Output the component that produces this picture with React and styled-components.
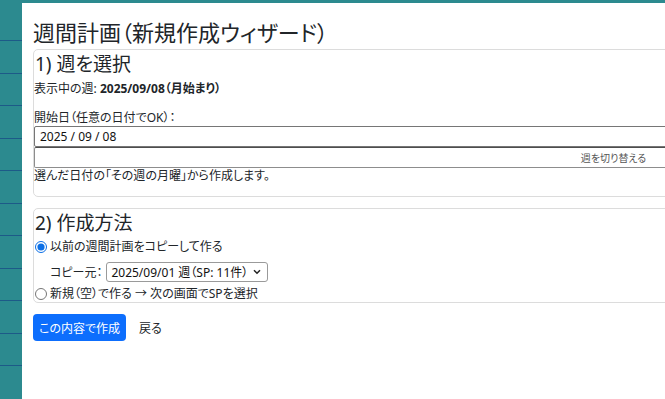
import React from 'react';
import styled, { createGlobalStyle } from 'styled-components';

const GlobalStyle = createGlobalStyle`
    html, body {
        margin: 0;
        padding: 0;
        overflow: hidden;
    }

    body {
        font-family: "Noto Sans", "Noto Sans CJK JP", sans-serif;
        font-feature-settings: "palt";
        color: #212529;
        background: #2c8a8f;
    }
`;

const Page = styled.div`
    display: flex;
    height: 399px;
    overflow: hidden;
    background: #2c8a8f;
`;

const Sidebar = styled.div`
    flex: 0 0 22px;
    display: flex;
    flex-direction: column;
    padding-top: 40px;
`;

const SidebarRow = styled.div`
    flex: 0 0 32.5px;
    box-sizing: border-box;
    border-top: 1.5px solid #1d5a88;
`;

const Panel = styled.div`
    flex: 0 0 1200px;
    margin-top: 3px;
    padding: 16px 0 0 11px;
    box-sizing: border-box;
    background: #fff;
`;

const Title = styled.h1`
    margin: 0 0 4px;
    font-size: 22px;
    line-height: 26px;
    font-weight: 400;
`;

const Section = styled.section`
    width: 1159px;
    border: 1px solid #dcdcdc;
    border-radius: 5px;
    padding: 3px 0 ${({ $bottom }) => $bottom}px;
    margin-bottom: ${({ $gap }) => $gap}px;
`;

const SectionTitle = styled.h2`
    margin: 0 0 0 1px;
    font-size: 19px;
    line-height: 23px;
    font-weight: 400;
`;

const Line = styled.div`
    font-size: 12px;
    line-height: 18px;
    margin-top: 4px;
`;

const Label = styled.label`
    display: block;
    font-size: 12px;
    line-height: 16px;
    margin-top: 12px;
`;

const DateInput = styled.input`
    display: block;
    box-sizing: border-box;
    width: 100%;
    height: 21px;
    margin: 0;
    padding: 0 5px;
    border: 1px solid #767676;
    border-radius: 2px;
    font: inherit;
    font-size: 12px;
    color: #111;
    background: #fff;
`;

const SwitchButton = styled.button`
    display: block;
    box-sizing: border-box;
    width: 100%;
    height: 21px;
    margin: 0;
    padding: 0;
    border: 1px solid #8d8d8d;
    border-top-color: #4d4d4d;
    border-radius: 2px;
    background: #fff;
    font: inherit;
    font-size: 10px;
    color: #555;
    text-align: center;
`;

const Hint = styled.p`
    margin: 0;
    font-size: 12px;
    line-height: 15px;
`;

const RadioRow = styled.label`
    display: flex;
    align-items: center;
    font-size: 12px;
    line-height: ${({ $h }) => $h}px;
    margin-top: ${({ $top }) => $top}px;
`;

const Radio = styled.input`
    width: 12px;
    height: 12px;
    margin: 0 3px 0 1px;
    accent-color: #0b6fe6;
`;

const CopyRow = styled.div`
    display: flex;
    align-items: center;
    gap: 4px;
    margin: 5px 0 0 16px;
    font-size: 12px;
`;

const SelectWrap = styled.div`
    position: relative;
    width: 162px;
`;

const Select = styled.select`
    appearance: none;
    box-sizing: border-box;
    width: 100%;
    height: 20px;
    margin: 0;
    padding: 0 16px 0 4px;
    border: 1px solid #9a9a9a;
    border-radius: 3px;
    background: #fff;
    font: inherit;
    font-size: 12px;
    color: #111;
`;

const Chevron = styled.svg`
    position: absolute;
    right: 7px;
    top: 7px;
    pointer-events: none;
`;

const Actions = styled.div`
    display: flex;
    align-items: center;
    gap: 13px;
`;

const PrimaryButton = styled.button`
    height: 27px;
    padding: 0 6px;
    border: none;
    border-radius: 4px;
    background: #0d6efd;
    color: #fff;
    font: inherit;
    font-size: 12px;
`;

const BackLink = styled.span`
    font-size: 12px;
    color: #212529;
`;

const App = () => (
    <>
        <GlobalStyle />
        <Page>
            <Sidebar>
                {Array.from({ length: 11 }, (_, i) => <SidebarRow key={i} />)}
            </Sidebar>
            <Panel>
                <Title>週間計画（新規作成ウィザード）</Title>
                <Section $bottom={13} $gap={11}>
                    <SectionTitle>1) 週を選択</SectionTitle>
                    <Line>
                        表示中の週: <strong>2025/09/08（月始まり）</strong>
                    </Line>
                    <Label htmlFor='start'>開始日（任意の日付でOK）：</Label>
                    <DateInput id='start' type='text' readOnly value='2025 / 09 / 08' />
                    <SwitchButton type='button'>週を切り替える</SwitchButton>
                    <Hint>選んだ日付の「その週の月曜」から作成します。</Hint>
                </Section>
                <Section $bottom={0} $gap={11}>
                    <SectionTitle>2) 作成方法</SectionTitle>
                    <RadioRow $h={20} $top={2}>
                        <Radio type='radio' name='mode' defaultChecked />
                        以前の週間計画をコピーして作る
                    </RadioRow>
                    <CopyRow>
                        <span>コピー元：</span>
                        <SelectWrap>
                            <Select defaultValue='0901'>
                                <option value='0901'>2025/09/01 週（SP: 11件）</option>
                            </Select>
                            <Chevron width='8' height='6' viewBox='0 0 8 6'>
                                <path d='M1 1.2 L4 4.2 L7 1.2' fill='none' stroke='#222' strokeWidth='1.5' />
                            </Chevron>
                        </SelectWrap>
                    </CopyRow>
                    <RadioRow $h={16} $top={4}>
                        <Radio type='radio' name='mode' />
                        新規（空）で作る → 次の画面でSPを選択
                    </RadioRow>
                </Section>
                <Actions>
                    <PrimaryButton type='button'>この内容で作成</PrimaryButton>
                    <BackLink>戻る</BackLink>
                </Actions>
            </Panel>
        </Page>
    </>
);

export default App;
